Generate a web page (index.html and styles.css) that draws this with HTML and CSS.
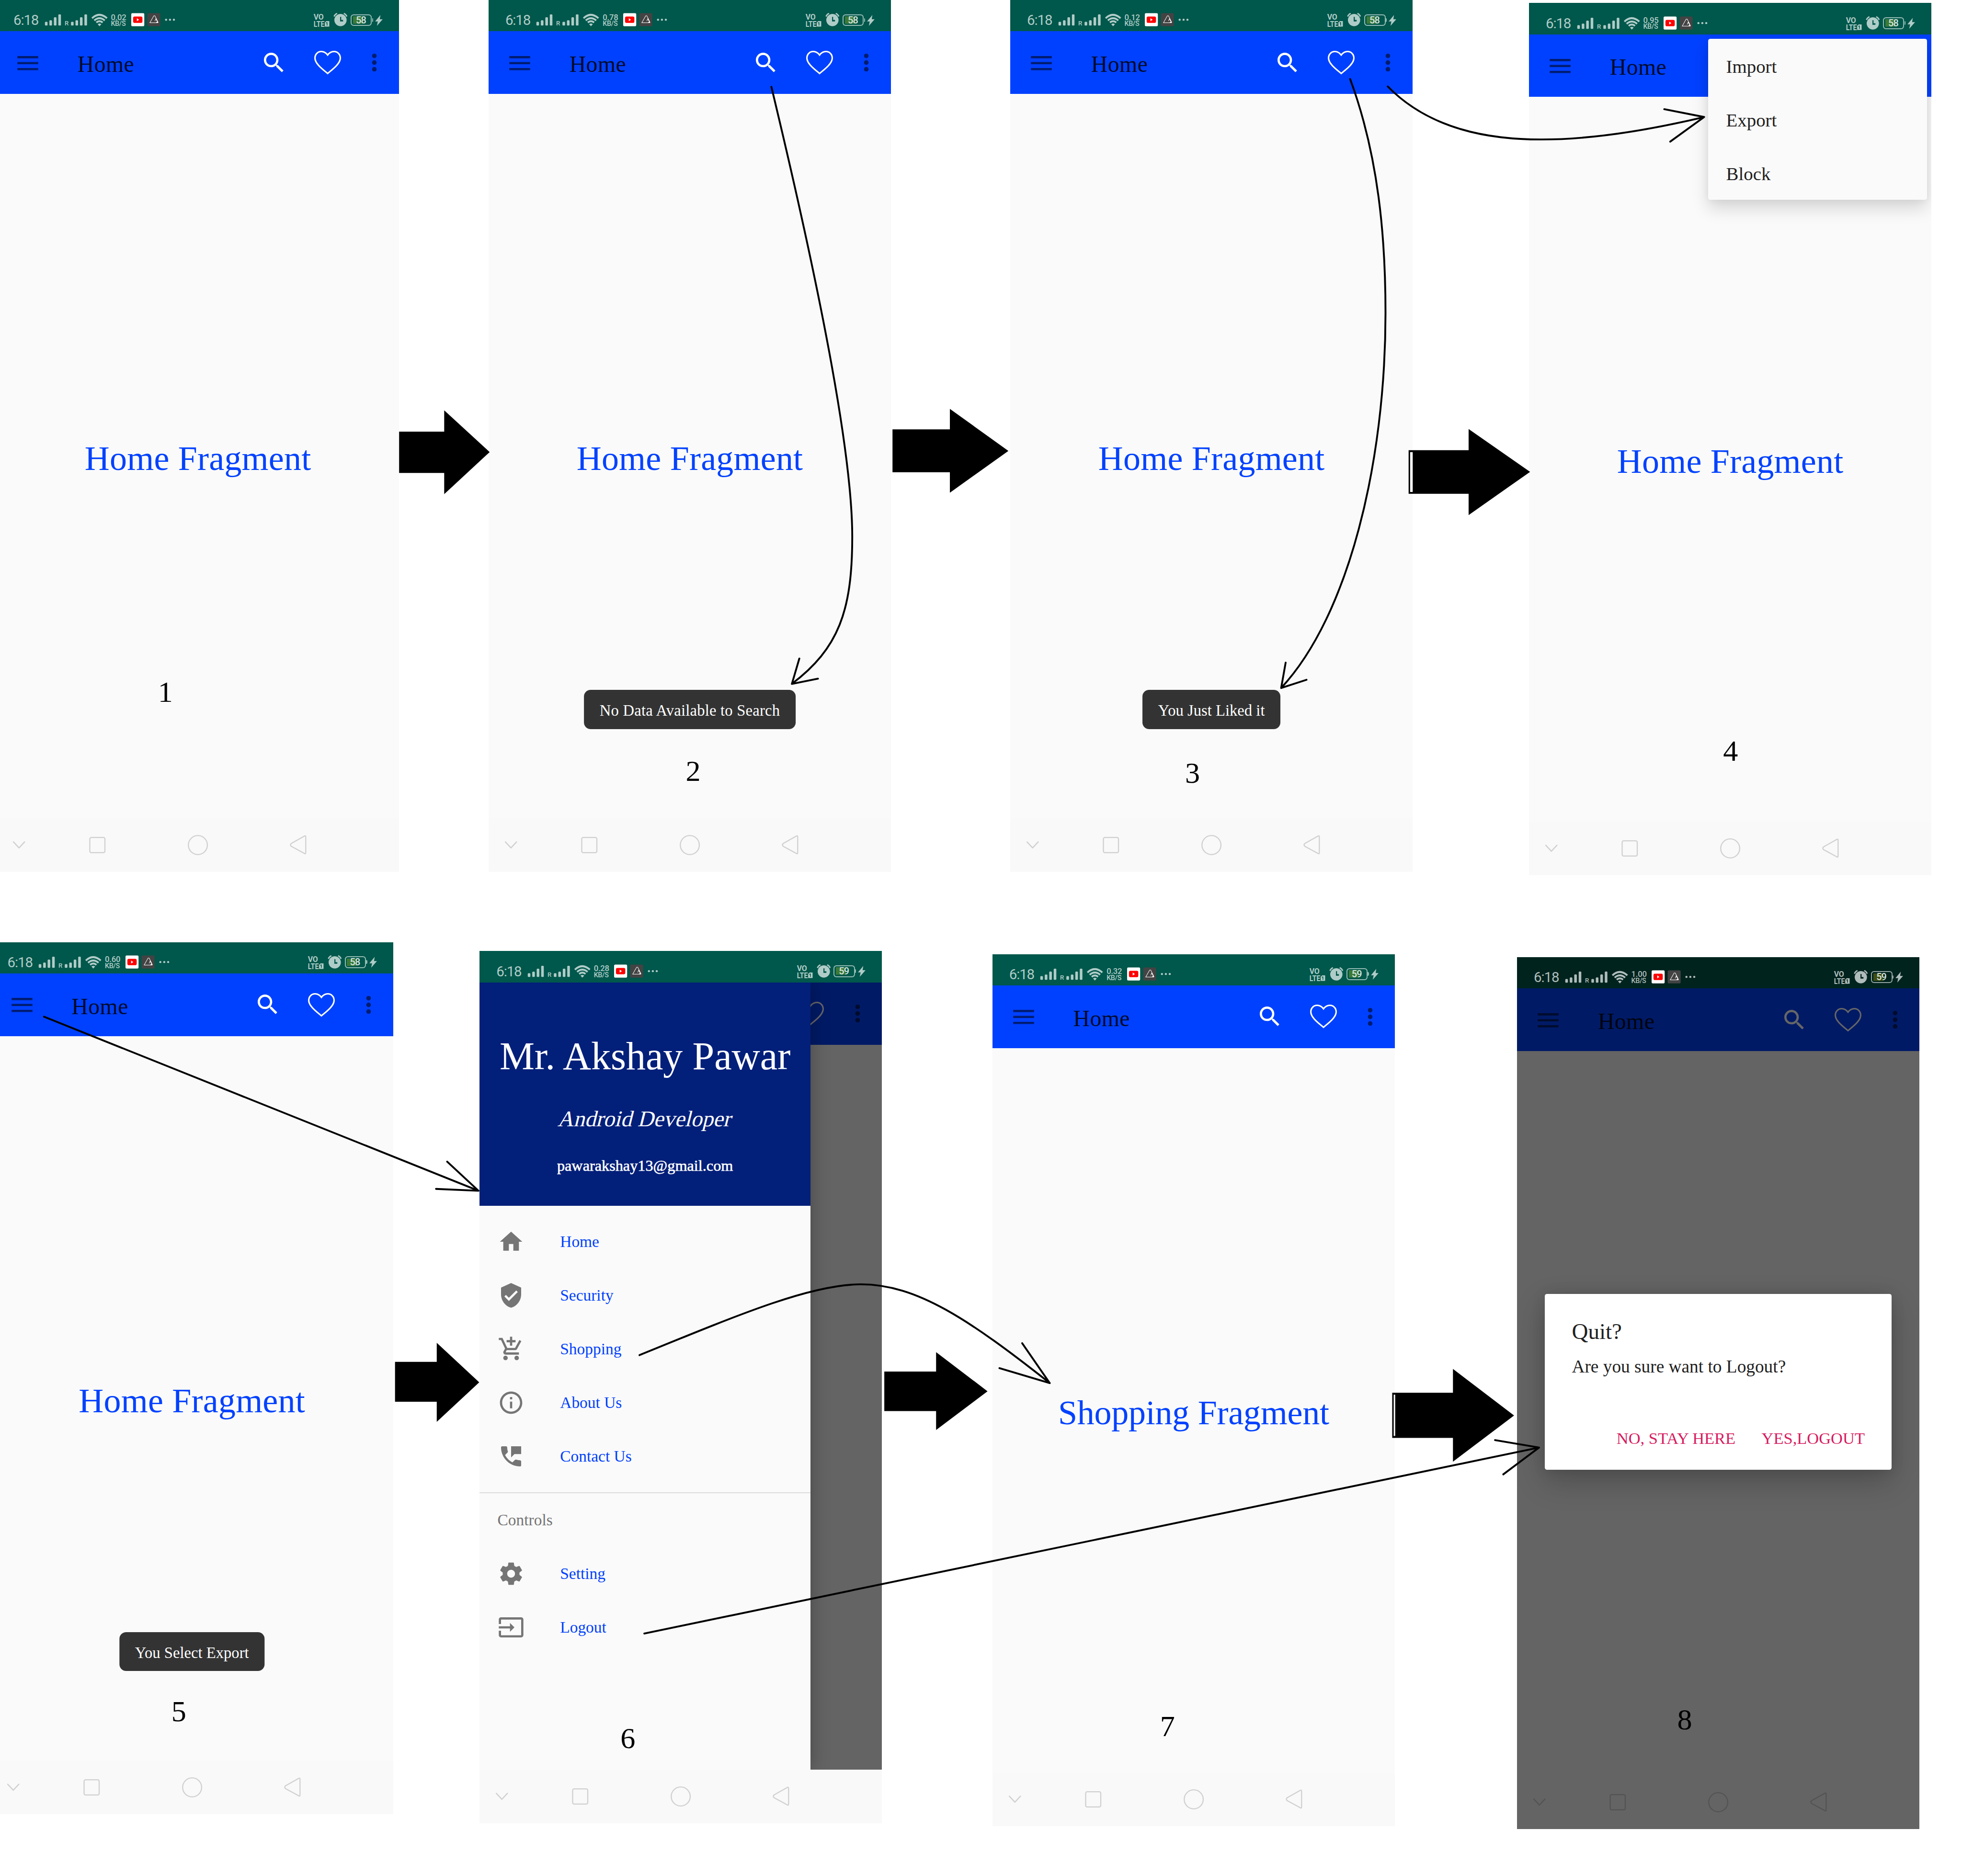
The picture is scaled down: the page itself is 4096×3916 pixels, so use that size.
FILE: index.html
```html
<!DOCTYPE html>
<html lang="en">
<head>
<meta charset="utf-8">
<title>App flow</title>
<link rel="stylesheet" href="styles.css">
</head>
<body>
<svg class="sprite" aria-hidden="true">
  <symbol id="signal" viewBox="128 34 170 40" overflow="visible">
    <g fill="currentColor">
      <rect x="129" y="59" width="7" height="10" rx="2"/><rect x="141" y="55" width="7" height="14" rx="2"/><rect x="153" y="47" width="7" height="22" rx="2"/><rect x="165" y="39" width="7" height="30" rx="2"/>
      <text x="182" y="69" font-family="Roboto" font-size="17" font-weight="500">R</text>
      <rect x="199" y="59" width="7" height="10" rx="2"/><rect x="211" y="55" width="7" height="14" rx="2"/><rect x="223" y="47" width="7" height="22" rx="2"/><rect x="235" y="39" width="7" height="30" rx="2"/>
      <path d="M270.500 65.500L275.500 71L280.500 65.500Q275.500 61.500 270.500 65.500Z"/>
    </g>
    <g fill="none" stroke="currentColor" stroke-width="5">
      <path d="M255.500 49.500Q275 31 295.500 49.500"/><path d="M261.500 55.500Q275.500 43.500 289.500 55.500"/><path d="M267 61Q275.500 54 284 61"/>
    </g>
  </symbol>
  <symbol id="apps" viewBox="362 34 120 40">
    <rect x="362" y="36" width="35" height="35" rx="3" fill="#fff"/>
    <rect x="367" y="45" width="25" height="17" rx="4" fill="#f00"/>
    <path d="M377 49.500v8l6-4z" fill="#fff"/>
    <rect x="405" y="36" width="35" height="35" rx="3" fill="#434343"/>
    <path d="M429 60.500h5L425.500 43h-3L412 61.500h21.500L428 51l-2.500 6" fill="none" stroke="#fff" stroke-width="1.300"/>
    <g fill="currentColor"><circle cx="455.500" cy="53.500" r="2.800"/><circle cx="466" cy="53.500" r="2.800"/><circle cx="476.500" cy="53.500" r="2.800"/></g>
  </symbol>
  <symbol id="volte" viewBox="850 34 94 40" overflow="visible">
    <g fill="currentColor">
      <text x="851" y="53" font-family="Roboto" font-size="20.500" font-weight="700" textLength="27">VO</text>
      <text x="851" y="72" font-family="Roboto" font-size="21" font-weight="700" textLength="29" lengthAdjust="spacingAndGlyphs">LTE</text>
      <path fill-rule="evenodd" d="M885 57h8v15h-12V61zM886 60l-2 2v1h2v6h2v-9z"/>
      <path fill-rule="evenodd" d="M923 38a16.500 16.500 0 1 0 .1 0zM922 46h3v8h5v4h-8z"/>
    </g>
    <path d="M906 45Q908 39 914 36.500M940 45Q938 39 932 36.500" fill="none" stroke="currentColor" stroke-width="3.500"/>
  </symbol>
  <symbol id="bolt" viewBox="1018 42 18 25" overflow="visible"><path d="M1030 42.500L1018.500 56.500H1025L1023 66.500L1035.500 52H1028.500z" fill="currentColor" stroke="currentColor" stroke-width="1.500"/></symbol>
  <symbol id="burger" viewBox="0 0 72 72"><path d="M8 18h56v6H8zM8 34h56v6H8zM8 50h56v6H8z" fill="currentColor"/></symbol>
  <symbol id="search" viewBox="0 0 24 24"><path fill="currentColor" d="M15.500 14h-.79l-.28-.27C15.410 12.590 16 11.110 16 9.500 16 5.910 13.090 3 9.500 3S3 5.910 3 9.500 5.910 16 9.500 16c1.610 0 3.090-.59 4.230-1.570l.27.28v.79l5 4.990L20.490 19l-4.990-5zm-6 0C7.010 14 5 11.990 5 9.500S7.010 5 9.500 5 14 7.010 14 9.500 11.990 14 9.500 14z"/></symbol>
  <symbol id="heart" viewBox="0 0 72 64"><path fill="none" stroke="currentColor" stroke-width="4" d="M36 61C24 50.500 2 35 2 19.500C2 9 10 2 19 2C27 2 32 6 36 11.500C40 6 45 2 53 2C62 2 70 9 70 19.500C70 35 48 50.500 36 61Z"/></symbol>
  <symbol id="more" viewBox="0 0 14 48"><g fill="currentColor"><circle cx="7" cy="6" r="6.200"/><circle cx="7" cy="24" r="6.200"/><circle cx="7" cy="42" r="6.200"/></g></symbol>
  <symbol id="nav" viewBox="0 0 1080 144">
    <g fill="none" stroke="currentColor" stroke-width="3" stroke-linecap="round" stroke-linejoin="round">
      <path d="M45 63.500L60 79.500L75 63.500"/>
      <rect x="250" y="51.500" width="40.500" height="41" rx="4"/>
      <circle cx="540" cy="72" r="25.500"/>
      <path d="M826.500 47.500Q829.500 46 829.500 50V92Q829.500 97 826 94.500L791 75.500Q786 71.500 791 67.500Z"/>
    </g>
  </symbol>
  <symbol id="i-home" viewBox="0 0 24 24"><path fill="currentColor" d="M10 20v-6h4v6h5v-8h3L12 3 2 12h3v8z"/></symbol>
  <symbol id="i-security" viewBox="0 0 24 24"><path fill="currentColor" d="M12 1L3 5v6c0 5.550 3.840 10.740 9 12 5.160-1.260 9-6.450 9-12V5l-9-4zm-2 16l-4-4 1.410-1.410L10 14.170l6.590-6.590L18 9l-8 8z"/></symbol>
  <symbol id="i-cart" viewBox="0 0 24 24"><path fill="currentColor" d="M11 9h2V6h3V4h-3V1h-2v3H8v2h3v3zm-4 9c-1.100 0-1.990.9-1.990 2S5.900 22 7 22s2-.9 2-2-.9-2-2-2zm10 0c-1.100 0-1.990.9-1.990 2s.89 2 1.990 2 2-.9 2-2-.9-2-2-2zm-9.830-3.250l.03-.12.9-1.630h7.450c.75 0 1.410-.41 1.750-1.030l3.860-7.010L19.420 4h-.01l-1.100 2-2.760 5H8.530l-.13-.27L6.160 6l-.95-2-.94-2H1v2h2l3.600 7.590-1.350 2.450c-.16.28-.25.61-.25.96 0 1.100.9 2 2 2h12v-2H7.420c-.13 0-.25-.11-.25-.25z"/></symbol>
  <symbol id="i-info" viewBox="0 0 24 24"><path fill="currentColor" d="M11 17h2v-6h-2v6zm1-15C6.480 2 2 6.480 2 12s4.480 10 10 10 10-4.480 10-10S17.520 2 12 2zm0 18c-4.410 0-8-3.590-8-8s3.590-8 8-8 8 3.590 8 8-3.590 8-8 8zM11 9h2V7h-2v2z"/></symbol>
  <symbol id="i-phone" viewBox="0 0 24 24"><path fill="currentColor" d="M20 15.500c-1.250 0-2.450-.2-3.570-.57-.35-.11-.74-.03-1.020.24l-2.200 2.200c-2.830-1.440-5.150-3.750-6.590-6.580l2.200-2.210c.28-.27.36-.66.25-1.010C8.700 6.450 8.500 5.250 8.500 4c0-.55-.45-1-1-1H4c-.55 0-1 .45-1 1 0 9.390 7.610 17 17 17 .55 0 1-.45 1-1v-3.500c0-.55-.45-1-1-1zM12 3v10l3-3h6V3h-9z"/></symbol>
  <symbol id="i-gear" viewBox="0 0 24 24"><path fill="currentColor" d="M19.430 12.980c.04-.32.07-.64.07-.98s-.03-.66-.07-.98l2.110-1.650c.19-.15.24-.42.12-.64l-2-3.460c-.12-.22-.39-.3-.61-.22l-2.490 1c-.52-.4-1.080-.73-1.690-.98l-.38-2.650C14.460 2.180 14.250 2 14 2h-4c-.25 0-.46.18-.49.42l-.38 2.650c-.61.25-1.170.59-1.690.98l-2.490-1c-.23-.09-.49 0-.61.22l-2 3.460c-.13.22-.07.49.12.64l2.110 1.650c-.04.32-.07.65-.07.98s.03.66.07.98l-2.110 1.650c-.19.15-.24.42-.12.64l2 3.460c.12.22.39.3.61.22l2.490-1c.52.4 1.080.73 1.690.98l.38 2.650c.03.24.24.42.49.42h4c.25 0 .46-.18.49-.42l.38-2.650c.61-.25 1.170-.59 1.690-.98l2.490 1c.23.09.49 0 .61-.22l2-3.460c.12-.22.07-.49-.12-.64l-2.110-1.650zM12 15.500c-1.930 0-3.500-1.570-3.500-3.500s1.570-3.500 3.500-3.500 3.500 1.570 3.500 3.500-1.570 3.500-3.500 3.500z"/></symbol>
  <symbol id="i-exit" viewBox="0 0 24 24"><path fill="currentColor" d="M21 3.010H3c-1.100 0-2 .9-2 2V9h2V4.990h18v14.030H3V15H1v4.010c0 1.100.9 1.980 2 1.980h18c1.100 0 2-.88 2-1.980v-14c0-1.110-.9-2-2-2zM11 16l4-4-4-4v3H1v2h10v3z"/></symbol>
</svg>

<main class="board">
  <section class="phone p1">
    <header class="status"><span class="time">6:18</span><svg class="s-signal"><use href="#signal"/></svg><span class="speed"><span>0.02</span><span>KB/S</span></span><svg class="s-apps"><use href="#apps"/></svg><svg class="s-volte"><use href="#volte"/></svg><span class="battery">58</span><svg class="s-bolt"><use href="#bolt"/></svg></header>
    <nav class="toolbar"><svg class="t-burger"><use href="#burger"/></svg><h1>Home</h1><svg class="t-search"><use href="#search"/></svg><svg class="t-heart"><use href="#heart"/></svg><svg class="t-more"><use href="#more"/></svg></nav>
    <div class="content"><p>Home Fragment</p></div>
    <svg class="navbar"><use href="#nav"/></svg>
  </section>

  <section class="phone p2">
    <header class="status"><span class="time">6:18</span><svg class="s-signal"><use href="#signal"/></svg><span class="speed"><span>0.78</span><span>KB/S</span></span><svg class="s-apps"><use href="#apps"/></svg><svg class="s-volte"><use href="#volte"/></svg><span class="battery">58</span><svg class="s-bolt"><use href="#bolt"/></svg></header>
    <nav class="toolbar"><svg class="t-burger"><use href="#burger"/></svg><h1>Home</h1><svg class="t-search"><use href="#search"/></svg><svg class="t-heart"><use href="#heart"/></svg><svg class="t-more"><use href="#more"/></svg></nav>
    <div class="content"><p>Home Fragment</p></div>
    <svg class="navbar"><use href="#nav"/></svg>
    <div class="toast wide">No Data Available to Search</div>
  </section>

  <section class="phone p3">
    <header class="status"><span class="time">6:18</span><svg class="s-signal"><use href="#signal"/></svg><span class="speed"><span>0.12</span><span>KB/S</span></span><svg class="s-apps"><use href="#apps"/></svg><svg class="s-volte"><use href="#volte"/></svg><span class="battery">58</span><svg class="s-bolt"><use href="#bolt"/></svg></header>
    <nav class="toolbar"><svg class="t-burger"><use href="#burger"/></svg><h1>Home</h1><svg class="t-search"><use href="#search"/></svg><svg class="t-heart"><use href="#heart"/></svg><svg class="t-more"><use href="#more"/></svg></nav>
    <div class="content"><p>Home Fragment</p></div>
    <svg class="navbar"><use href="#nav"/></svg>
    <div class="toast">You Just Liked it</div>
  </section>

  <section class="phone p4">
    <header class="status"><span class="time">6:18</span><svg class="s-signal"><use href="#signal"/></svg><span class="speed"><span>0.95</span><span>KB/S</span></span><svg class="s-apps"><use href="#apps"/></svg><svg class="s-volte"><use href="#volte"/></svg><span class="battery">58</span><svg class="s-bolt"><use href="#bolt"/></svg></header>
    <nav class="toolbar"><svg class="t-burger"><use href="#burger"/></svg><h1>Home</h1></nav>
    <div class="content"><p>Home Fragment</p></div>
    <svg class="navbar"><use href="#nav"/></svg>
    <ul class="menu"><li>Import</li><li>Export</li><li>Block</li></ul>
  </section>

  <section class="phone p5">
    <header class="status"><span class="time">6:18</span><svg class="s-signal"><use href="#signal"/></svg><span class="speed"><span>0.60</span><span>KB/S</span></span><svg class="s-apps"><use href="#apps"/></svg><svg class="s-volte"><use href="#volte"/></svg><span class="battery">58</span><svg class="s-bolt"><use href="#bolt"/></svg></header>
    <nav class="toolbar"><svg class="t-burger"><use href="#burger"/></svg><h1>Home</h1><svg class="t-search"><use href="#search"/></svg><svg class="t-heart"><use href="#heart"/></svg><svg class="t-more"><use href="#more"/></svg></nav>
    <div class="content"><p>Home Fragment</p></div>
    <svg class="navbar"><use href="#nav"/></svg>
    <div class="toast">You Select Export</div>
  </section>

  <section class="phone p6">
    <header class="status"><span class="time">6:18</span><svg class="s-signal"><use href="#signal"/></svg><span class="speed"><span>0.28</span><span>KB/S</span></span><svg class="s-apps"><use href="#apps"/></svg><svg class="s-volte"><use href="#volte"/></svg><span class="battery">59</span><svg class="s-bolt"><use href="#bolt"/></svg></header>
    <nav class="toolbar bare"><svg class="t-heart"><use href="#heart"/></svg><svg class="t-more"><use href="#more"/></svg></nav>
    <div class="content"></div>
    <svg class="navbar"><use href="#nav"/></svg>
    <div class="scrim">
      <aside class="drawer">
        <div class="profile">
          <p class="name">Mr. Akshay Pawar</p>
          <p class="role">Android Developer</p>
          <p class="mail">pawarakshay13@gmail.com</p>
        </div>
        <ul class="items">
          <li><svg><use href="#i-home"/></svg>Home</li>
          <li><svg><use href="#i-security"/></svg>Security</li>
          <li><svg><use href="#i-cart"/></svg>Shopping</li>
          <li><svg><use href="#i-info"/></svg>About Us</li>
          <li><svg><use href="#i-phone"/></svg>Contact Us</li>
        </ul>
        <ul class="items controls">
          <li class="label">Controls</li>
          <li><svg><use href="#i-gear"/></svg>Setting</li>
          <li><svg><use href="#i-exit"/></svg>Logout</li>
        </ul>
      </aside>
    </div>
  </section>

  <section class="phone p7">
    <header class="status"><span class="time">6:18</span><svg class="s-signal"><use href="#signal"/></svg><span class="speed"><span>0.32</span><span>KB/S</span></span><svg class="s-apps"><use href="#apps"/></svg><svg class="s-volte"><use href="#volte"/></svg><span class="battery">59</span><svg class="s-bolt"><use href="#bolt"/></svg></header>
    <nav class="toolbar"><svg class="t-burger"><use href="#burger"/></svg><h1>Home</h1><svg class="t-search"><use href="#search"/></svg><svg class="t-heart"><use href="#heart"/></svg><svg class="t-more"><use href="#more"/></svg></nav>
    <div class="content shopping"><p>Shopping Fragment</p></div>
    <svg class="navbar"><use href="#nav"/></svg>
  </section>

  <section class="phone p8">
    <header class="status dim"><span class="time">6:18</span><svg class="s-signal"><use href="#signal"/></svg><span class="speed"><span>1.00</span><span>KB/S</span></span><svg class="s-apps"><use href="#apps"/></svg><svg class="s-volte"><use href="#volte"/></svg><span class="battery">59</span><svg class="s-bolt"><use href="#bolt"/></svg></header>
    <nav class="toolbar"><svg class="t-burger"><use href="#burger"/></svg><h1>Home</h1><svg class="t-search"><use href="#search"/></svg><svg class="t-heart"><use href="#heart"/></svg><svg class="t-more"><use href="#more"/></svg></nav>
    <div class="content"></div>
    <svg class="navbar"><use href="#nav"/></svg>
    <div class="scrim full">
      <div class="dialog">
        <h2>Quit?</h2>
        <p>Are you sure want to Logout?</p>
        <div class="actions"><span class="no">NO, STAY HERE</span><span class="yes">YES,LOGOUT</span></div>
      </div>
    </div>
  </section>

  <svg class="arrows" viewBox="0 0 5265 5034">
    <g fill="#000">
      <path d="M1071 1158H1192V1101L1314 1213L1192 1326V1269H1071Z"/>
      <path d="M2395 1152H2549V1097L2706 1210L2549 1322V1267H2395Z"/>
      <path fill-rule="evenodd" d="M3780 1208H3941V1151L4106 1266L3941 1382V1325H3780ZM3784 1213V1320H3791V1213Z"/>
      <path d="M1060 3654H1172V3603L1286 3709L1172 3815V3761H1060Z"/>
      <path d="M2373 3680H2512V3628L2650 3733L2512 3837V3786H2373Z"/>
      <path fill-rule="evenodd" d="M3736 3737H3899V3673L4063 3798L3899 3922V3858H3736ZM3740 3742V3853H3744V3742Z"/>
    </g>
    <g fill="none" stroke="#000" stroke-width="5" stroke-linecap="round" stroke-linejoin="round">
      <path d="M2070 233C2180 690 2287 1190 2287 1440C2287 1640 2250 1740 2125 1835M2145 1767L2125 1835L2195 1821"/>
      <path d="M3623 212C3700 420 3718 640 3718 840C3718 1240 3620 1650 3438 1846M3450 1778L3438 1846L3506 1824"/>
      <path d="M3724 232C3865 376 4110 424 4573 314M4466 293L4573 314L4482 380"/>
      <path d="M118 2728L1284 3195M1200 3117L1284 3195L1170 3190"/>
      <path d="M1716 3636C2000 3520 2180 3446 2310 3446C2460 3446 2600 3540 2817 3711M2743 3604L2817 3711L2682 3671"/>
      <path d="M1729 4383L4130 3884M4012 3864L4130 3884L4034 3956"/>
    </g>
  </svg>

  <span class="num n1">1</span><span class="num n2">2</span><span class="num n3">3</span><span class="num n4">4</span>
  <span class="num n5">5</span><span class="num n6">6</span><span class="num n7">7</span><span class="num n8">8</span>
</main>
</body>
</html>
```
FILE: styles.css
```css
/* 1rem is one hundred board units; a phone screen is 1080 x 2340 units */
html { font-size: 77.7968px; }
* { box-sizing: border-box; margin: 0; padding: 0; }
body { background: #fff; font-family: "Liberation Serif", serif; overflow: hidden; }
ul { list-style: none; }
svg { display: block; flex: none; }
.sprite { position: absolute; width: 0; height: 0; }

.board { position: relative; width: 52.65rem; height: 50.34rem; overflow: hidden; background: #fff; }

.phone { position: absolute; width: 10.8rem; height: 23.4rem; overflow: hidden; display: flex; flex-direction: column; background: #fafafa; }
.p1 { left: -0.09rem; top: 0; }
.p2 { left: 13.11rem; top: 0; }
.p3 { left: 27.11rem; top: 0; }
.p4 { left: 41.03rem; top: 0.08rem; }
.p5 { left: -0.25rem; top: 25.28rem; }
.p6 { left: 12.87rem; top: 25.52rem; }
.p7 { left: 26.63rem; top: 25.6rem; }
.p8 { left: 40.71rem; top: 25.68rem; }

/* status bar */
.status { flex: none; display: flex; align-items: flex-start; height: 0.84rem; padding: 0.34rem 0.45rem 0 0.45rem; background: #00574b; color: #b0ccc8; font-family: Roboto, sans-serif; white-space: nowrap; }
.status svg { overflow: visible; }
.time { width: 0.83rem; font-size: 0.38rem; line-height: 0.46rem; margin-top: -0.015rem; letter-spacing: -0.015rem; }
.s-signal { width: 1.7rem; height: 0.4rem; }
.speed { width: 0.54rem; margin-left: 0.085rem; display: flex; flex-direction: column; margin-top: -0.01rem; }
.speed span { font-size: 0.215rem; line-height: 0.26rem; letter-spacing: -0.003rem; font-weight: 500; }
.speed span + span { font-size: 0.185rem; line-height: 0.22rem; margin-top: -0.06rem; letter-spacing: -0.005rem; }
.s-apps { width: 1.2rem; height: 0.4rem; margin-left: 0.01rem; }
.s-volte { width: 0.94rem; height: 0.4rem; margin-left: auto; }
.battery { position: relative; width: 0.57rem; height: 0.32rem; margin: 0.04rem 0.1rem 0 0.06rem; border: 0.03rem solid #93bbb3; border-radius: 0.08rem; font-size: 0.255rem; line-height: 0.27rem; font-weight: 500; letter-spacing: -0.01rem; padding-left: 0.115rem; color: #d5e6e2; background: linear-gradient(#3c7a36, #3c7a36) 0.035rem 0.03rem / 0.27rem 0.2rem no-repeat; }
.battery::after { content: ""; position: absolute; right: -0.06rem; top: 0.08rem; width: 0.03rem; height: 0.1rem; background: #93bbb3; border-radius: 0 0.03rem 0.03rem 0; }
.s-bolt { width: 0.18rem; height: 0.25rem; margin-top: 0.08rem; }
.dim { background: #00231e; color: #b0bdbb; }
.dim .battery { border-color: #93a3a1; background-image: linear-gradient(#404d10, #404d10); }
.dim .battery::after { background: #93a3a1; }
.status.dim { position: relative; z-index: 2; }

/* toolbar */
.toolbar { flex: none; display: flex; align-items: center; height: 1.68rem; padding: 0 0.59rem 0 0.48rem; background: #0041ff; color: rgba(0, 0, 0, .56); }
.toolbar h1 { flex: 1; margin-left: 0.97rem; padding-top: 0.09rem; font-weight: 400; font-size: 0.615rem; line-height: 0.7rem; letter-spacing: 0.005rem; color: rgba(0, 0, 0, .87); }
.toolbar svg { width: 0.72rem; height: 0.72rem; }
.toolbar .t-search { color: #fff; }
.toolbar .t-heart { color: #fff; height: 0.64rem; margin-left: 0.72rem; }
.toolbar .t-more { width: 0.14rem; height: 0.48rem; margin-left: 0.83rem; }
.bare { justify-content: flex-end; }

.content { flex: 1; display: flex; align-items: center; justify-content: center; }
.content p { color: #0041ff; font-size: 0.925rem; line-height: 1rem; letter-spacing: 0.003rem; padding-top: 0.15rem; white-space: nowrap; }
.shopping p { letter-spacing: -0.003rem; }
.navbar { width: 10.8rem; height: 1.44rem; background: #f9f9f9; color: #d0d0d0; }

.toast { position: absolute; top: 18.51rem; left: 50%; transform: translateX(-50%); height: 1.05rem; line-height: 1.11rem; padding: 0 0.42rem; border-radius: 0.18rem; background: #333; color: #fff; font-size: 0.42rem; white-space: nowrap; }
.toast.wide { letter-spacing: 0.0025rem; }

.menu { position: absolute; left: 4.81rem; top: 0.96rem; width: 5.87rem; height: 4.32rem; border-radius: 0.06rem; background: #fafafa; box-shadow: 0 0.22rem 0.45rem rgba(0, 0, 0, .15), 0 0 0.2rem rgba(0, 0, 0, .06); }
.menu li { height: 1.44rem; line-height: 1.5rem; padding-left: 0.48rem; font-size: 0.5rem; color: #212121; }

/* drawer */
.scrim { position: absolute; left: 0; top: 0.84rem; width: 100%; height: 21.12rem; overflow: hidden; background: rgba(0, 0, 0, .6); }
.scrim.full { top: 0; height: 100%; display: flex; flex-direction: column; }
.drawer { width: 8.88rem; height: 100%; background: #fafafa; box-shadow: 0 0 0.48rem rgba(0, 0, 0, .3); }
.profile { height: 6rem; background: #021f7a; color: #fff; display: flex; flex-direction: column; align-items: center; white-space: nowrap; }
.name { font-size: 1.055rem; line-height: 1.2rem; margin-top: 1.385rem; letter-spacing: -0.001rem; }
.role { font-size: 0.6rem; line-height: 0.7rem; margin-top: 0.725rem; transform: skewX(-14deg); padding-left: 0.03rem; }
.mail { font-size: 0.415rem; line-height: 0.5rem; margin-top: 0.66rem; -webkit-text-stroke: 0.008rem #fff; }
.items { padding: 0.24rem 0; color: #0041ff; font-size: 0.43rem; }
.items li { display: flex; align-items: center; height: 1.44rem; line-height: 0.5rem; padding-left: 0.48rem; white-space: nowrap; }
.items li::first-line { line-height: 0.5rem; }
.items svg { width: 0.72rem; height: 0.72rem; margin-right: 0.96rem; color: #757575; }
.items { line-height: 0.5rem; }
.items.items li { line-height: 1.55rem; }
.controls { padding-top: 0; border-top: 0.03rem solid #dcdcdc; }
.items .label { color: #757575; }

/* dialog */
.dialog { flex: none; width: 9.3rem; height: 4.71rem; margin: 9.04rem 0 0 0.75rem; padding: 0.66rem 0.72rem 0; border-radius: 0.06rem; background: #fff; color: #212121; box-shadow: 0 0.3rem 0.8rem rgba(0, 0, 0, .22), 0 0 0.35rem rgba(0, 0, 0, .12); white-space: nowrap; }
.dialog h2 { font-weight: 400; font-size: 0.605rem; line-height: 0.7rem; }
.dialog p { font-size: 0.48rem; line-height: 0.6rem; margin-top: 0.3rem; }
.actions { display: flex; justify-content: flex-end; gap: 0.7rem; margin-top: 1.37rem; color: #d81b60; font-size: 0.443rem; line-height: 0.5rem; }

.arrows { position: absolute; left: 0; top: 0; width: 52.65rem; height: 50.34rem; }

.num { position: absolute; width: 1rem; text-align: center; font-size: 0.8rem; line-height: 1rem; color: #000; }
.n1 { left: 3.94rem; top: 18.07rem; }
.n2 { left: 18.1rem; top: 20.19rem; }
.n3 { left: 31.5rem; top: 20.24rem; }
.n4 { left: 45.94rem; top: 19.66rem; }
.n5 { left: 4.3rem; top: 45.43rem; }
.n6 { left: 16.35rem; top: 46.14rem; }
.n7 { left: 30.83rem; top: 45.82rem; }
.n8 { left: 44.71rem; top: 45.65rem; }
```
